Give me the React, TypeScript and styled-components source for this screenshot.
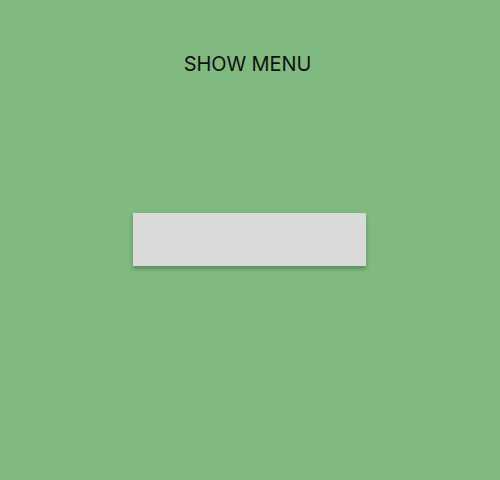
import React from "react";
import styled, { createGlobalStyle } from "styled-components";

const Global = createGlobalStyle`
  html, body { margin: 0; padding: 0; }
  body { background: #80ba80; font-family: Inter, Roboto, "Liberation Sans", sans-serif; }
`;

const Page = styled.div`
  width: 500px;
  height: 480px;
  display: flex;
  flex-direction: column;
  align-items: center;
`;

const ToggleButton = styled.button`
  margin-top: 50px;
  margin-left: -5px;
  background: none;
  border: none;
  padding: 0;
  font-family: Inter, Roboto, "Liberation Sans", sans-serif;
  font-size: 20px;
  line-height: 28px;
  letter-spacing: -0.1px;
  color: #111;
  cursor: pointer;
`;

const Menu = styled.div`
  margin-top: 135px;
  margin-right: 1px;
  width: 233px;
  height: 53px;
  background: #dadada;
  box-shadow: 0 3px 4px rgba(0, 0, 0, 0.25);
`;

export default function App() {
  return (
    <>
      <Global />
      <Page>
        <ToggleButton>SHOW MENU</ToggleButton>
        <Menu />
      </Page>
    </>
  );
}
